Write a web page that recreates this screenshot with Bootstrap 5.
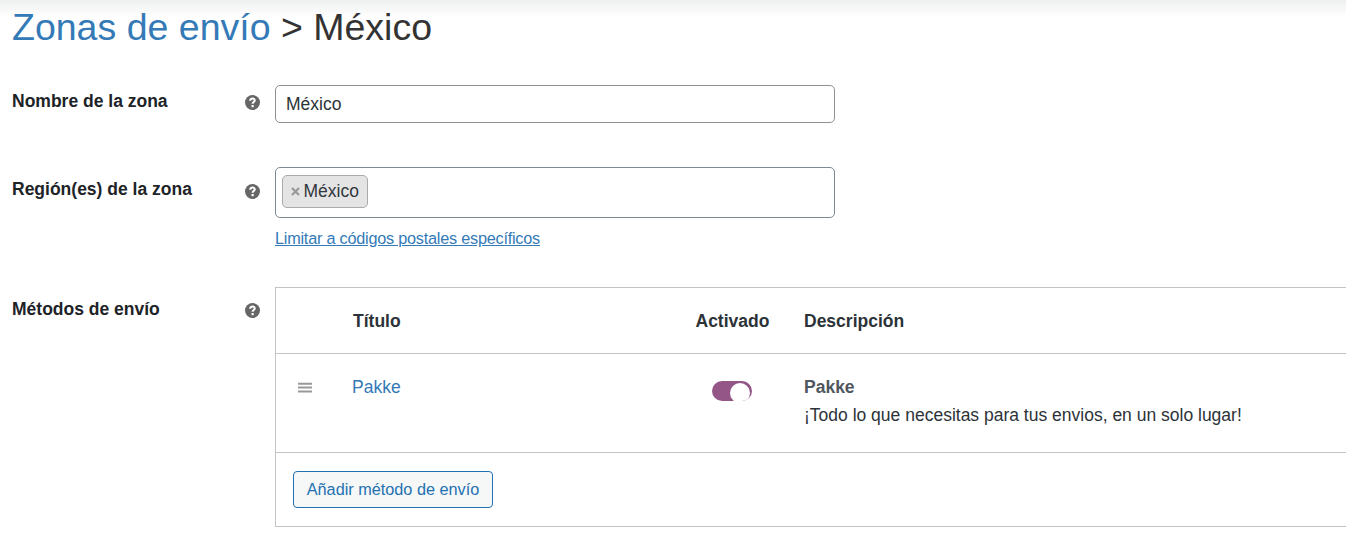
<!DOCTYPE html>
<html lang="es">
<head>
<meta charset="utf-8">
<title>Zonas de envío</title>
<link href="https://cdn.jsdelivr.net/npm/bootstrap@5.3.0/dist/css/bootstrap.min.css" rel="stylesheet">
<style>
body{font-family:"Liberation Sans",Arial,sans-serif;font-size:17.5px;line-height:28px;color:#2c3338;background:#fff linear-gradient(#eeefef,#fff 17px) no-repeat;height:537px;overflow:hidden}
a{color:#337ab7;text-decoration:none}
h1{font-size:37.5px;line-height:54px;height:85px;color:#333;font-weight:400;margin:0}
.row-name{height:82px}
.row-regions{height:120px}
.zone-label{width:263px;padding:8px 15px 0 0;color:#1d2327;font-weight:700}
.row-name .zone-label{padding-top:2px}
.tip{width:15px;height:15px;margin-top:8px}
.row-regions .tip{margin-top:9px}
.zone-name{width:560px;height:38px;border:1px solid #8c8f94;border-radius:5px;padding:0 10px;font-size:17.5px;line-height:36px;color:#2c3338;background:#fff}
.zone-regions{width:560px;height:51px;border:1px solid #7e8993;border-radius:5px;padding:7px 6px}
.region-tag{height:33px;width:86px;border:1px solid #aaa;border-radius:5px;background:#e4e4e4;padding:0 0 1px 8px;line-height:28px;color:#32373c}
.region-tag svg{margin:1px 3.5px 0 0}
.limit{font-size:16.25px;letter-spacing:-.23px;line-height:24px;text-decoration:underline;margin-top:8px}
.methods{border:1px solid #c3c4c7;border-right:0;height:240px}
.methods-head{height:66px;border-bottom:1px solid #c3c4c7;font-weight:700}
.methods-row{height:99px;border-bottom:1px solid #c3c4c7;padding-top:19px}
.c-sort{width:76px;padding-left:22px}
.grip{margin-top:9px}
.c-title{width:343px}
.methods-head .c-title{padding-left:1px}
.c-on{width:109px}
.methods-head .c-on{padding-left:.5px}
.toggle{width:40px;height:20px;border-radius:10px;background:#935687;overflow:hidden;margin:8px 0 0 17px}
.toggle span{width:20px;height:20px;border-radius:50%;background:#fff;margin:2px 0 0 18px}
.method-name{color:#50575e}
.add{width:200px;height:37px;margin:18px 0 0 17px;border:1px solid #2271b1;border-radius:4px;background:#f6f7f7;color:#2271b1;font-size:16.25px;line-height:35px;padding:0}
</style>
</head>
<body>
<svg class="d-none"><symbol id="help" viewBox="0 0 15 15"><circle cx="7.5" cy="7.5" r="7.5" fill="#666"/><path d="M5.2 5.8C5.2 2.7 9.9 2.8 9.7 5.5C9.6 7.1 7.6 7 7.6 8.7" fill="none" stroke="#fff" stroke-width="2.1"/><rect x="6.5" y="10" width="2.2" height="2.2" fill="#fff"/></symbol></svg>
<main class="ps-2">
<div class="ps-1">
<h1><a href="#">Zonas de envío</a> &gt; México</h1>
<div class="row-name d-flex">
  <div class="zone-label d-flex justify-content-between"><span>Nombre de la zona</span><svg class="tip"><use href="#help"/></svg></div>
  <input class="zone-name" value="México" aria-label="Nombre de la zona">
</div>
<div class="row-regions d-flex">
  <div class="zone-label d-flex justify-content-between"><span>Región(es) de la zona</span><svg class="tip"><use href="#help"/></svg></div>
  <div>
    <div class="zone-regions"><div class="region-tag d-flex align-items-center"><svg width="9" height="9" viewBox="0 0 9 9"><path d="M1 1l7 7M8 1l-7 7" stroke="#999" stroke-width="2.2"/></svg>México</div></div>
    <a href="#" class="limit d-block">Limitar a códigos postales específicos</a>
  </div>
</div>
<div class="d-flex">
  <div class="zone-label d-flex flex-shrink-0 justify-content-between"><span>Métodos de envío</span><svg class="tip"><use href="#help"/></svg></div>
  <div class="methods flex-grow-1">
    <div class="methods-head d-flex align-items-center"><div class="c-sort"></div><div class="c-title">Título</div><div class="c-on">Activado</div><div>Descripción</div></div>
    <div class="methods-row d-flex">
      <div class="c-sort"><svg class="grip d-block" width="14" height="12"><path d="M0 1.7h14M0 5.6h14M0 9.6h14" stroke="#999" stroke-width="2"/></svg></div>
      <div class="c-title"><a href="#">Pakke</a></div>
      <div class="c-on"><div class="toggle"><span class="d-block"></span></div></div>
      <div><b class="method-name">Pakke</b><br>¡Todo lo que necesitas para tus envios, en un solo lugar!</div>
    </div>
    <button class="add d-block">Añadir método de envío</button>
  </div>
</div>
</div>
</main>
<script src="https://cdn.jsdelivr.net/npm/bootstrap@5.3.0/dist/js/bootstrap.bundle.min.js"></script>
</body>
</html>
